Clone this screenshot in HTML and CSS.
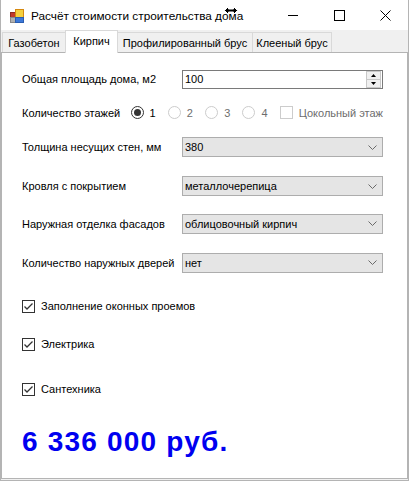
FILE: index.html
```html
<!DOCTYPE html>
<html lang="ru">
<head>
<meta charset="utf-8">
<title>Расчёт стоимости строительства дома</title>
<link rel="stylesheet" href="styles.css">
</head>
<body>
<div class="window">
  <div class="titlebar">
    <svg class="appicon" width="14" height="14" viewBox="0 0 14 14">
      <rect x="0.5" y="3.5" width="5" height="5" fill="#c0392b" stroke="#8e2a20"/>
      <rect x="5.5" y="0.5" width="8" height="8" fill="#f4d03f" stroke="#d68910"/>
      <rect x="0.5" y="8.5" width="5" height="5" fill="#b0b0b0" stroke="#888"/>
      <rect x="5.5" y="8.5" width="8" height="5" fill="#3c78d8" stroke="#2a5db0"/>
    </svg>
    <span class="title">Расчёт стоимости строительства дома</span>
    <div class="caption-buttons">
      <span class="cbtn"><svg width="10" height="10" viewBox="0 0 10 10"><line x1="0" y1="5.5" x2="10" y2="5.5" stroke="#000" stroke-width="1"/></svg></span>
      <span class="cbtn"><svg width="11" height="11" viewBox="0 0 11 11"><rect x="0.5" y="0.5" width="10" height="10" fill="none" stroke="#000" stroke-width="1"/></svg></span>
      <span class="cbtn"><svg width="11" height="11" viewBox="0 0 11 11"><path d="M0.5 0.5 L10.5 10.5 M10.5 0.5 L0.5 10.5" stroke="#000" stroke-width="1"/></svg></span>
    </div>
    <svg class="cursor" width="14" height="9" viewBox="0 0 14 9">
      <path d="M0.5 4.5 L4.5 0.5 L4.5 3 L9.5 3 L9.5 0.5 L13.5 4.5 L9.5 8.5 L9.5 6 L4.5 6 L4.5 8.5 Z" fill="#000" stroke="#fff" stroke-width="1"/>
    </svg>
  </div>
  <div class="client">
    <div class="tabs">
      <div class="tab t1">Газобетон</div>
      <div class="tab t2 active">Кирпич</div>
      <div class="tab t3">Профилированный брус</div>
      <div class="tab t4">Клееный брус</div>
    </div>
    <div class="panel">
      <div class="form">
        <div class="label">Общая площадь дома, м2</div>
        <div class="spin">
          <span class="value">100</span>
          <span class="spin-btns">
            <span class="sbtn"><svg width="5" height="3" viewBox="0 0 5 3"><path d="M0 3 L2.5 0 L5 3 Z" fill="#000"/></svg></span>
            <span class="sbtn"><svg width="5" height="3" viewBox="0 0 5 3"><path d="M0 0 L2.5 3 L5 0 Z" fill="#000"/></svg></span>
          </span>
        </div>

        <div class="floors">
          <div class="label floors-label">Количество этажей</div>
          <div class="radio"><span class="circle checked"></span><span>1</span></div>
          <div class="radio disabled"><span class="circle"></span><span>2</span></div>
          <div class="radio disabled"><span class="circle"></span><span>3</span></div>
          <div class="radio disabled"><span class="circle"></span><span>4</span></div>
          <div class="check disabled"><span class="box"></span><span>Цокольный этаж</span></div>
        </div>

        <div class="label">Толщина несущих стен, мм</div>
        <div class="combo"><span>380</span><svg width="9" height="5" viewBox="0 0 9 5"><path d="M0.5 0.5 L4.5 4.5 L8.5 0.5" fill="none" stroke="#6a6a6a"/></svg></div>

        <div class="label">Кровля с покрытием</div>
        <div class="combo"><span>металлочерепица</span><svg width="9" height="5" viewBox="0 0 9 5"><path d="M0.5 0.5 L4.5 4.5 L8.5 0.5" fill="none" stroke="#6a6a6a"/></svg></div>

        <div class="label">Наружная отделка фасадов</div>
        <div class="combo"><span>облицовочный кирпич</span><svg width="9" height="5" viewBox="0 0 9 5"><path d="M0.5 0.5 L4.5 4.5 L8.5 0.5" fill="none" stroke="#6a6a6a"/></svg></div>

        <div class="label">Количество наружных дверей</div>
        <div class="combo"><span>нет</span><svg width="9" height="5" viewBox="0 0 9 5"><path d="M0.5 0.5 L4.5 4.5 L8.5 0.5" fill="none" stroke="#6a6a6a"/></svg></div>

        <div class="check wide"><span class="box"><svg width="11" height="11" viewBox="0 0 11 11"><path d="M1.5 5.5 L4 8 L9.5 2.5" fill="none" stroke="#333" stroke-width="1.3"/></svg></span><span>Заполнение оконных проемов</span></div>
        <div class="check wide"><span class="box"><svg width="11" height="11" viewBox="0 0 11 11"><path d="M1.5 5.5 L4 8 L9.5 2.5" fill="none" stroke="#333" stroke-width="1.3"/></svg></span><span>Электрика</span></div>
        <div class="check wide"><span class="box"><svg width="11" height="11" viewBox="0 0 11 11"><path d="M1.5 5.5 L4 8 L9.5 2.5" fill="none" stroke="#333" stroke-width="1.3"/></svg></span><span>Сантехника</span></div>

        <div class="price">6 336 000 руб.</div>
      </div>
    </div>
  </div>
</div>
</body>
</html>
```
FILE: styles.css
```css
* { box-sizing: border-box; }
html, body { margin: 0; padding: 0; background: #fff; }
body {
  font-family: "Liberation Sans", Arial, sans-serif;
  font-size: 11px;
  color: #000;
}
.window {
  width: 409px;
  height: 481px;
  display: flex;
  flex-direction: column;
  border-left: 1px solid #b4b4b4;
  border-right: 1px solid #b4b4b4;
  border-bottom: 1px solid #b4b4b4;
  background: #f0f0f0;
}
.titlebar {
  height: 30px;
  background: #fff;
  display: flex;
  align-items: center;
  position: relative;
  flex: none;
}
.appicon { margin-left: 9px; margin-top: 1px; }
.title {
  margin-left: 7px;
  font-size: 11.8px;
  margin-top: 1px;
}
.caption-buttons {
  margin-left: auto;
  display: flex;
  height: 30px;
}
.cbtn {
  width: 46px;
  height: 30px;
  display: flex;
  align-items: center;
  justify-content: center;
}
.cursor {
  position: absolute;
  left: 223px;
  top: 6px;
}
.client {
  flex: 1;
  display: flex;
  flex-direction: column;
  padding: 0 0 1px 0;
}
.tabs {
  height: 22px;
  display: flex;
  align-items: flex-end;
  padding-left: 1px;
  flex: none;
}
.tab {
  height: 20px;
  border: 1px solid #d9d9d9;
  border-bottom: none;
  background: #f0f0f0;
  display: flex;
  align-items: center;
  justify-content: center;
  padding-top: 1px;
  margin-right: -1px;
  white-space: nowrap;
}
.t1 { width: 64px; }
.t2 { width: 53px; }
.t3 { width: 136px; }
.t4 { width: 80px; }
.tab.active {
  height: 23px;
  margin-bottom: -1px;
  background: #fff;
  position: relative;
  z-index: 1;
  padding-top: 0;
  padding-bottom: 3px;
}
.panel {
  flex: 1;
  background: #fff;
  border: 1px solid #b4b4b4;
  margin-right: 0;
}
.form {
  display: grid;
  grid-template-columns: 160px 201px;
  grid-template-rows: 32px 34px 36px 42px 33px 45px 42px 34px 56px 50px;
  padding: 10px 0 0 20px;
  align-items: center;
}
.label { white-space: nowrap; }
.spin {
  height: 19px;
  border: 1px solid #7a7a7a;
  background: #fff;
  display: flex;
  align-items: center;
  padding-left: 2px;
}
.spin .value { flex: 1; }
.spin-btns {
  display: flex;
  flex-direction: column;
  width: 15px;
  height: 17px;
  margin-right: 1px;
}
.sbtn {
  flex: 1;
  border: 1px solid #c8c8c8;
  background: #f0f0f0;
  display: flex;
  align-items: center;
  justify-content: center;
}
.sbtn + .sbtn { border-top: none; }
.floors {
  grid-column: 1 / 3;
  display: flex;
  align-items: center;
  margin-top: 1px;
}
.floors-label { width: 109px; }
.radio {
  width: 37.5px;
  display: flex;
  align-items: center;
  gap: 6px;
}
.circle {
  width: 13px;
  height: 13px;
  border-radius: 50%;
  border: 1px solid #ccc;
  background: #fff;
  display: flex;
  align-items: center;
  justify-content: center;
}
.circle.checked { border-color: #333; }
.circle.checked::after {
  content: "";
  width: 7px;
  height: 7px;
  border-radius: 50%;
  background: #333;
}
.disabled { color: #6d6d6d; }
.check {
  display: flex;
  align-items: center;
  gap: 6px;
  white-space: nowrap;
}
.check.wide { grid-column: 1 / 3; }
.box {
  width: 13px;
  height: 13px;
  border: 1px solid #333;
  background: #fff;
  display: flex;
  align-items: center;
  justify-content: center;
}
.check.disabled .box { border-color: #ccc; }
.combo {
  height: 20px;
  background: #e5e5e5;
  border: 1px solid #adadad;
  display: flex;
  align-items: center;
  justify-content: space-between;
  padding: 0 5px 0 2px;
}
.price {
  grid-column: 1 / 3;
  color: #0000f0;
  font-weight: bold;
  font-size: 28px;
  letter-spacing: 1.2px;
  white-space: nowrap;
}
```
